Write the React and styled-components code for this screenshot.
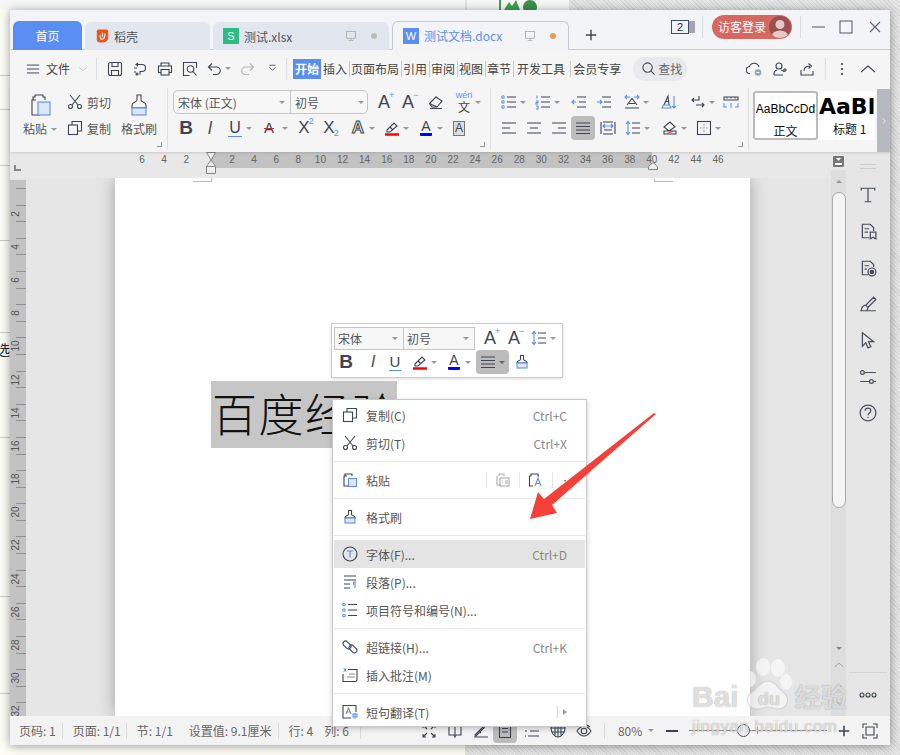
import React from 'react';
import styled, { createGlobalStyle } from 'styled-components';

const BLUE = '#5a8ef0';
const DARK = '#3d4454';
const SANS = '"Noto Sans CJK SC", "Noto Sans", sans-serif';
const LATIN = '"Liberation Sans", "Noto Sans CJK SC", sans-serif';

const Global = createGlobalStyle`
  html, body { margin: 0; padding: 0; }
  body { font-family: ${SANS}; font-size: 12px; color: #555; }
`;

const Screen = styled.div`
  position: relative;
  width: 900px;
  height: 755px;
  padding: 10px;
  box-sizing: border-box;
  overflow: hidden;
  background-color: #dedede;
  background-image:
    linear-gradient(#f7f7f7, #f7f7f7),
    linear-gradient(#fdfdf6, #fdfdf6),
    linear-gradient(#fdfdf8, #fdfdf8),
    repeating-linear-gradient(45deg, #d8d8d8 0 1px, #e6e6e6 1px 3px);
  background-size: 570px 10px, 465px 10px, 10px 100%, 100% 100%;
  background-position: 0 0, 0 100%, 0 0, 0 0;
  background-repeat: no-repeat;
`;

const SideLine = styled.div`
  position: absolute;
  left: 0;
  top: ${p => p.$y}px;
  width: 10px;
  height: 1px;
  background: #ccc;
`;

const PeekText = styled.span`
  position: absolute;
  left: -4px;
  top: 339px;
  font-size: 14px;
  color: #223;
`;

const TopPeek = styled.svg`
  position: absolute;
  left: 460px;
  top: 0;
  width: 110px;
  height: 10px;
`;

const Win = styled.div`
  position: relative;
  display: flex;
  flex-direction: column;
  height: 735px;
  background: #f5f5f5;
  box-shadow: 0 1px 9px rgba(0, 0, 0, 0.4);
`;

/* tabs */
const TabBar = styled.div`
  display: flex;
  align-items: flex-end;
  height: 40px;
  flex: none;
  box-sizing: border-box;
  padding-left: 3px;
  background: #f3f4f8;
  border-bottom: 1px solid #c6cad4;
`;

const Tab = styled.div`
  display: flex;
  align-items: center;
  width: ${p => p.$w}px;
  height: 28px;
  box-sizing: border-box;
  margin-right: 3px;
  margin-bottom: -1px;
  padding-left: ${p => p.$pl || 10}px;
  border-radius: 6px 6px 0 0;
  font-size: 12px;
  background: #e2e6ef;
  color: #555;
  ${p => p.$home && `background: ${BLUE}; color: #fff; justify-content: center; padding-left: 0; height: 29px; border-bottom: 1px solid ${BLUE};`}
  ${p => p.$active && `background: #f3f4f8; color: ${BLUE}; border: 1px solid #c6cad4; border-bottom: 1px solid #f3f4f8; height: 29px; margin-bottom: -1px;`}
`;

const TabLabel = styled.span`
  margin-left: 5px;
  white-space: nowrap;
`;

const TabTail = styled.div`
  margin-left: auto;
  display: flex;
  align-items: center;
  gap: 14px;
  padding-right: 12px;
`;

const Dot = styled.i`
  width: 6px;
  height: 6px;
  border-radius: 50%;
  background: ${p => p.$c};
`;

const BadgeIcon = styled.div`
  width: 16px;
  height: 16px;
  display: flex;
  align-items: center;
  justify-content: center;
  background: ${p => p.$c};
  color: #fff;
  font: 11px ${LATIN};
  flex: none;
`;

const NewTab = styled.div`
  align-self: center;
  margin: 10px 0 0 3px;
  width: 32px;
  display: flex;
  justify-content: center;
`;

const WinTools = styled.div`
  margin-left: auto;
  align-self: stretch;
  display: flex;
  align-items: center;
  padding-bottom: 6px;
  padding-right: 7px;
`;

const CountBox = styled.div`
  width: 16px;
  height: 12px;
  border: 1px solid #3d4a66;
  font: 11px/12px ${LATIN};
  color: #223;
  text-align: center;
`;

const LoginPill = styled.div`
  display: flex;
  align-items: center;
  justify-content: space-between;
  width: 80px;
  height: 24px;
  box-sizing: border-box;
  margin-left: 9px;
  padding: 0 1px 0 6px;
  border-radius: 12px;
  background: #d6685f;
  color: #fff;
  font-size: 12px;
`;

const Avatar = styled.div`
  width: 22px;
  height: 22px;
  border-radius: 50%;
  overflow: hidden;
  background: #9c4f50;
`;

const VLine = styled.div`
  width: 1px;
  height: ${p => p.$h || 22}px;
  flex: none;
  margin-left: ${p => p.$ml || 0}px;
  background: #d9dbe0;
`;

/* menu row */
const MenuRow = styled.div`
  display: flex;
  align-items: center;
  height: 37px;
  flex: none;
  padding-left: 16px;
  background: #f5f5f5;
`;

const Cell = styled.div`
  display: flex;
  align-items: center;
  justify-content: center;
  flex: none;
  width: ${p => p.$w || 16}px;
  margin-left: ${p => p.$ml || 0}px;
  ${p => p.$box && 'height: 24px; border-radius: 4px; background: #bcbcbc;'}
`;

const MenuText = styled.span`
  margin-left: ${p => p.$ml || 0}px;
  color: #444;
  white-space: nowrap;
`;

const StartTab = styled.div`
  margin-left: 6px;
  width: 28px;
  height: 20px;
  line-height: 20px;
  text-align: center;
  background: ${BLUE};
  color: #fff;
  font-weight: 700;
`;

const MenuTab = styled.div`
  margin-left: ${p => p.$ml || 0}px;
  padding: 0 2px 0 ${p => p.$pl || 1}px;
  line-height: 16px;
  color: #444;
  white-space: nowrap;
  ${p => p.$plain ? '' : 'border-left: 1px solid #c8c8c8;'}
`;

const SearchPill = styled.div`
  display: flex;
  align-items: center;
  gap: 2px;
  width: 54px;
  height: 24px;
  box-sizing: border-box;
  margin-left: 10px;
  padding-left: 8px;
  border-radius: 12px;
  background: #e8eaed;
  color: #666;
`;

const Tail = styled.div`
  margin-left: auto;
  display: flex;
  align-items: center;
  padding-right: 9px;
`;

/* ribbon */
const Ribbon = styled.div`
  display: flex;
  height: 65px;
  flex: none;
  padding-top: 1px;
  box-sizing: border-box;
  background: #f5f5f5;
  box-shadow: 0 1px 2px rgba(0, 0, 0, 0.12);
  position: relative;
  z-index: 2;
`;

const Group = styled.div`
  position: relative;
  display: flex;
  flex: none;
  width: ${p => p.$w}px;
  height: 62px;
  box-sizing: border-box;
  padding: 2px 0 0 ${p => p.$pl || 0}px;
  border-right: 1px solid #e0e0e0;
  ${p => p.$stack && 'flex-direction: column; gap: 2px;'}
`;

const Launcher = styled.i`
  position: absolute;
  right: 5px;
  bottom: 3px;
  width: 4px;
  height: 4px;
  border-right: 1px solid #999;
  border-bottom: 1px solid #999;
`;

const BigCol = styled.div`
  display: flex;
  flex-direction: column;
  align-items: center;
  flex: none;
  width: ${p => p.$w}px;
  margin-left: ${p => p.$ml || 0}px;
  padding-top: 3px;
`;

const BigLabel = styled.div`
  display: flex;
  align-items: center;
  gap: 4px;
  margin-top: 3px;
  line-height: 18px;
  white-space: nowrap;
`;

const SmallCol = styled.div`
  display: flex;
  flex-direction: column;
  gap: 2px;
  flex: none;
  margin-left: 10px;
  width: 44px;
`;

const Row = styled.div`
  display: flex;
  align-items: center;
  height: 24px;
  gap: ${p => p.$gap || 0}px;
`;

const Caret = styled.i`
  flex: none;
  width: 0;
  height: 0;
  margin-left: ${p => p.$ml ?? 3}px;
  border: 3px solid transparent;
  border-top: 3px solid ${p => p.$c || '#999'};
  border-bottom: 0;
  ${p => p.$up && 'transform: rotate(180deg);'}
`;

const FontBox = styled.div`
  display: flex;
  width: ${p => p.$w}px;
  height: ${p => p.$h}px;
  flex: none;
  box-sizing: border-box;
  border: 1px solid #c6c6c6;
  border-radius: ${p => p.$r || 0}px;
  overflow: hidden;
  background: #f7f7f7;
`;

const FontField = styled.div`
  display: flex;
  align-items: center;
  justify-content: space-between;
  box-sizing: border-box;
  flex: ${p => p.$w}px 0 0;
  padding: 0 5px 0 ${p => p.$pl || 4}px;
  color: #555;
  white-space: nowrap;
  & + & { border-left: 1px solid #c6c6c6; }
`;

const Glyph = styled.span`
  position: relative;
  display: inline-block;
  font-family: ${LATIN};
  font-size: ${p => p.$s || 17}px;
  line-height: 20px;
  font-weight: ${p => (p.$bold ? 700 : 400)};
  font-style: ${p => (p.$it ? 'italic' : 'normal')};
  color: ${p => p.$c || DARK};
  ${p => p.$under && `border-bottom: 1px solid ${BLUE}; line-height: 17px; padding: 0 1px;`}
  ${p => p.$strike && 'text-decoration: line-through; text-decoration-color: #b33;'}
  ${p => p.$outline && 'color: #eee; -webkit-text-stroke: 1px #444; font-weight: 700;'}
  ${p => p.$framed && 'border: 1px solid #777; background: #ddd; line-height: 13px; padding: 0 1px;'}
`;

const Mark = styled.sup`
  position: absolute;
  left: 100%;
  top: ${p => (p.$low ? '10px' : '-2px')};
  margin-left: -1px;
  font-size: 9px;
  line-height: 10px;
  color: ${BLUE};
  vertical-align: baseline;
`;

const ColorA = styled.span`
  display: inline-block;
  padding: 0 1px;
  font: 14px/13px ${LATIN};
  color: ${DARK};
  border-bottom: 3px solid ${p => p.$c};
  border-radius: 1px;
`;

const Wen = styled.div`
  display: flex;
  flex-direction: column;
  align-items: center;
  font-size: 12px;
  line-height: 13px;
  color: #444;
`;

const WenTop = styled.span`
  font: 9px/9px ${LATIN};
  color: ${BLUE};
`;

const Gallery = styled.div`
  display: flex;
  margin: 3px 0 0 4px;
  height: 49px;
  width: 122px;
  background: #fff;
  overflow: hidden;
`;

const StyleCard = styled.div`
  flex: none;
  width: ${p => p.$w}px;
  box-sizing: border-box;
  display: flex;
  flex-direction: column;
  align-items: ${p => (p.$on ? 'center' : 'flex-start')};
  overflow: hidden;
  white-space: nowrap;
  color: #111;
  ${p => p.$on && 'border: 2px solid #bbb; border-radius: 3px;'}
`;

const CardSample = styled.div`
  height: 30px;
  font-family: ${p => (p.$bold ? '"DejaVu Sans", sans-serif' : LATIN)};
  font-size: ${p => p.$s}px;
  font-weight: ${p => (p.$bold ? 700 : 400)};
  line-height: 32px;
  color: #000;
  ${p => p.$bold && 'margin-left: 1px;'}
`;

const CardName = styled.div`
  line-height: 16px;
  font-size: 12px;
  ${p => p.$inset && 'margin-left: 15px;'}
`;

const GalleryBtn = styled.div`
  position: absolute;
  right: 0;
  top: 2px;
  bottom: 0;
  width: 13px;
  display: flex;
  align-items: center;
  justify-content: center;
  background: #b6b9c0;
`;

/* work area */
const Work = styled.div`
  display: flex;
  flex: 1;
  min-height: 0;
`;

const EditorCol = styled.div`
  display: flex;
  flex-direction: column;
  width: 821px;
  flex: none;
  min-width: 0;
`;

const RulerBar = styled.div`
  position: relative;
  display: flex;
  height: 26px;
  flex: none;
  background: #e8e8e8;
  font: 10px/16px ${LATIN};
  color: #666;
`;

const RulerSeg = styled.div`
  display: flex;
  flex: none;
  width: ${p => p.$w}px;
  height: 16px;
  padding-left: ${p => p.$pl || 0}px;
  box-sizing: border-box;
  ${p => p.$dark && 'background: #c2c2c2;'}
`;

const RulerNum = styled.span`
  flex: none;
  width: 22.1px;
  text-align: center;
`;

const Corner = styled.i`
  position: absolute;
  left: 4px;
  top: 13px;
  width: 5px;
  height: 4px;
  border-left: 2px solid #888;
  border-bottom: 2px solid #888;
`;

const RulerMark = styled.svg`
  position: absolute;
  left: ${p => p.$x}px;
  top: ${p => p.$y}px;
`;

const DocRegion = styled.div`
  display: flex;
  flex: 1;
  min-height: 0;
  overflow: hidden;
  background: #e6e6e6;
`;

const VRuler = styled.div`
  flex: none;
  width: 16px;
  margin-top: 2px;
  padding-top: 8px;
  overflow: hidden;
  background: #c2c2c2;
  position: relative;
  z-index: 1;
`;

const VTick = styled.div`
  position: relative;
  height: 16.6px;
  box-sizing: border-box;
  border-top: 1px solid #8f8f8f;
  margin-left: 6px;
`;

const VNum = styled.span`
  position: absolute;
  left: -8px;
  top: 0;
  width: 16px;
  height: 16px;
  transform: rotate(-90deg);
  font: 10px/16px ${LATIN};
  color: #555;
  text-align: center;
`;

const PageSheet = styled.div`
  position: relative;
  flex: none;
  width: 635px;
  margin-left: 89px;
  box-sizing: border-box;
  padding: 203px 0 0 96px;
  background: #fff;
  box-shadow: 0 0 16px rgba(0, 0, 0, 0.3);
`;

const CropMark = styled.i`
  position: absolute;
  top: 0;
  left: ${p => p.$x}px;
  width: 18px;
  height: 3px;
  border-bottom: 1px solid #bbb;
  ${p => (p.$right ? 'border-left: 1px solid #bbb;' : 'border-right: 1px solid #bbb;')}
`;

const Selection = styled.div`
  width: 186px;
  height: 67px;
  padding-left: 1px;
  box-sizing: border-box;
  background: #c6c6c6;
  color: #111;
  font: 300 45px/64px ${SANS};
  letter-spacing: 1.5px;
  white-space: nowrap;
  overflow: hidden;
`;

const ScrollCol = styled.div`
  display: flex;
  flex-direction: column;
  flex: none;
  width: 15px;
  background: #e8e8e8;
`;

const ScrollHead = styled.div`
  height: 18px;
  flex: none;
  display: flex;
  align-items: flex-start;
  justify-content: center;
  padding-top: 4px;
  box-sizing: border-box;
`;

const Track = styled.div`
  flex: 1;
  display: flex;
  flex-direction: column;
  align-items: center;
  background: #dedede;
`;

const TrackBtn = styled.div`
  height: ${p => p.$h}px;
  width: 100%;
  flex: none;
  display: flex;
  align-items: center;
  justify-content: center;
`;

const Thumb = styled.div`
  width: 14px;
  height: 316px;
  flex: none;
  box-sizing: border-box;
  border: 1px solid #aaa;
  border-radius: 8px;
  background: #f5f5f5;
`;

const TrackEnd = styled.div`
  margin-top: auto;
  width: 100%;
  padding-bottom: 6px;
`;

const SidePanel = styled.div`
  display: flex;
  flex-direction: column;
  align-items: center;
  flex: 1;
  background: #e6e6e6;
`;

const Grip = styled.div`
  width: 16px;
  height: 3px;
  margin: 12px 0 8px;
  border-top: 1px solid #ccc;
  border-bottom: 1px solid #ccc;
`;

const SideBtn = styled.div`
  height: 36.3px;
  flex: none;
  display: flex;
  align-items: center;
  justify-content: center;
`;

const SideFoot = styled.div`
  margin-top: auto;
  width: 38px;
  height: 43px;
  display: flex;
  align-items: center;
  justify-content: center;
  border-top: 1px solid #d4d4d4;
`;

/* status bar */
const Status = styled.div`
  display: flex;
  align-items: center;
  height: 29px;
  flex: none;
  padding-left: 9px;
  background: #f3f3f3;
  color: #666;
  font-size: 12px;
`;

const StatusItem = styled.span`
  margin-left: ${p => p.$ml || 0}px;
  white-space: nowrap;
`;

const SliderLine = styled.div`
  position: relative;
  width: 138px;
  height: 1px;
  margin-left: 9px;
  background: #888;
`;

const SliderKnob = styled.i`
  position: absolute;
  left: 48px;
  top: -6px;
  width: 11px;
  height: 11px;
  border: 1px solid #555;
  border-radius: 50%;
  background: #eee;
`;

const SliderTick = styled.i`
  position: absolute;
  left: 68px;
  top: -3px;
  width: 1px;
  height: 7px;
  background: #999;
`;

/* floating toolbar */
const MiniBar = styled.div`
  position: absolute;
  left: 331px;
  top: 323px;
  width: 232px;
  height: 55px;
  box-sizing: border-box;
  padding: 2px 0 0 2px;
  border: 1px solid #ccc;
  background: #fff;
  box-shadow: 0 1px 3px rgba(0, 0, 0, 0.15);
`;

/* context menu */
const Menu = styled.div`
  position: absolute;
  left: 332px;
  top: 399px;
  width: 255px;
  height: 328px;
  box-sizing: border-box;
  padding: 1px;
  border: 1px solid #c8c8c8;
  background: #fff;
  box-shadow: 0 2px 5px rgba(0, 0, 0, 0.2);
`;

const MenuItem = styled.div`
  display: flex;
  align-items: center;
  height: 28px;
  padding: 0 18px 0 8px;
  color: #555;
  ${p => p.$on && 'background: #e4e4e4;'}
`;

const ItemLabel = styled.span`
  margin-left: 8px;
  white-space: nowrap;
`;

const Shortcut = styled.span`
  margin-left: auto;
  color: #888;
  font-size: 12px;
`;

const MenuSep = styled.div`
  height: 9px;
  display: flex;
  align-items: center;
  &::after { content: ''; flex: 1; height: 1px; background: #e8e8e8; }
`;

const PasteTools = styled.div`
  margin-left: auto;
  display: flex;
  align-items: center;
  margin-right: -18px;
`;

const PasteCell = styled.div`
  width: 32px;
  height: 16px;
  display: flex;
  align-items: center;
  justify-content: center;
  border-left: 1px solid #e4e4e4;
`;

const SubArrow = styled.i`
  margin-left: 5px;
  width: 0;
  height: 0;
  border: 3px solid transparent;
  border-left: 4px solid #999;
  border-right: 0;
`;

const Arrow = styled.svg`
  position: absolute;
  left: 520px;
  top: 405px;
`;

const Watermark = styled.div`
  position: absolute;
  left: 690px;
  top: 655px;
  width: 165px;
  height: 80px;
  pointer-events: none;
`;

const WmWords = styled.div`
  position: absolute;
  left: ${p => p.$x}px;
  top: ${p => p.$y}px;
  font-family: ${p => (p.$cjk ? SANS : LATIN)};
  font-size: ${p => p.$s}px;
  line-height: 1;
  font-weight: ${p => (p.$thin ? 400 : 700)};
  letter-spacing: ${p => p.$ls || 0}px;
  color: rgba(255, 255, 255, 0.72);
  text-shadow: 0 0 1px rgba(0, 0, 0, 0.45);
  white-space: nowrap;
`;

const Svg = styled.svg`
  display: block;
  flex: none;
  fill: none;
  stroke: ${p => p.$c || DARK};
  stroke-width: ${p => p.$sw || 1.1};
`;

const b = { stroke: BLUE };

const ICONS = {
  menu: <path d="M1 3.5h14M1 8h14M1 12.5h14" />,
  chevDown: <path d="M2 5.5l6 5 6-5" />,
  chevUp: <path d="M1 11l7-6 7 6" />,
  chevRight: <path d="M6 4l4 4-4 4" />,
  save: <g><rect x="1.500" y="1.500" width="13" height="13" rx="2" /><path d="M5 1.500v4h6v-4M4.500 14.500V9.500h7v5" /></g>,
  convert: <g><path d="M5 3.500h5a3.500 3.500 0 0 1 0 7H8v3" /><path d="M6 2L4 3.500 6 5M2 7h3M2 11h2" /><circle cx="5" cy="13" r="1" /></g>,
  print: <g><path d="M4 5V2h8v3M4 11.500H1.500V5h13v6.500H12" /><rect x="4" y="8.500" width="8" height="5.500" /></g>,
  preview: <g><path d="M14.500 7V1.500h-13v13h6" /><circle cx="8.500" cy="8" r="3.300" /><path d="M11 10.500l3.500 4" /></g>,
  undo: <path d="M5 2.500L1.500 6 5 9.500M1.500 6h8a3.500 3.500 0 0 1 0 7.500H6" />,
  redo: <path d="M11 2.500L14.500 6 11 9.500M14.500 6h-8a3.500 3.500 0 0 0 0 7.500H10" />,
  qat: <path d="M2 3h8M2 6l4 3.500L10 6" />,
  search: <g><circle cx="7" cy="7" r="5" /><path d="M10.500 10.500l4 4" /></g>,
  cloud: <g><path d="M4 12.500a3.500 3.500 0 0 1-.5-7A5 5 0 0 1 13 6" /><circle cx="12" cy="11.500" r="3.300" fill="#9aa4b8" stroke="none" /><path d="M10.500 11.500h3" stroke="#fff" /></g>,
  userPlus: <g><circle cx="7" cy="5" r="3" /><path d="M2 14v-1.500a4 4 0 0 1 3-3.500M9 9a4 4 0 0 1 3 2M2 14h9M11 9h4M13 7v4" /></g>,
  shareUp: <g><path d="M2 9v5h12V10" /><path d="M5 10c0-4 3-5 6-5M9.500 2.500L12.500 5 9.500 7.500" /></g>,
  dots: <g fill="#3d4454" stroke="none"><circle cx="8" cy="3" r="1.100" /><circle cx="8" cy="8" r="1.100" /><circle cx="8" cy="13" r="1.100" /></g>,
  monitor: <g><rect x="2" y="2" width="12" height="9" /><path d="M8 11v3M5 14h6" /></g>,
  plus: <path d="M8 2v12M2 8h12" />,
  minimize: <path d="M2 8h13" />,
  maximize: <rect x="2" y="2" width="12" height="12" />,
  close: <path d="M3 3l10 10M13 3L3 13" />,
  paste: <g><path d="M8 7H4v15h8" /><path d="M5 7V4h2V2h8v2h2v3" /><rect x="10" y="9" width="12" height="13" fill="#dfe7f6" {...b} /></g>,
  scissors: <g><circle cx="3.500" cy="12.500" r="2" /><circle cx="12.500" cy="12.500" r="2" /><path d="M5 11L13 1M11 11L3 1" /></g>,
  copy: <g><rect x="1.500" y="5" width="9" height="9.500" /><path d="M5 5V1.500h9.500V11H10.500" /></g>,
  brush: <g><path d="M10 2h4v5c0 2 5 2 5 5v3H5v-3c0-3 5-3 5-5z" /><rect x="5" y="15" width="14" height="7" fill="#dfe7f6" {...b} /></g>,
  brushSm: <g><path d="M6.500 1.500h3v4c0 1 3.500 1 3.500 3V9H3v-.5c0-2 3.500-2 3.500-3z" /><rect x="3" y="9" width="10" height="5" fill="#dfe7f6" {...b} /></g>,
  pasteSm: <g><path d="M5 4H2v10h4" /><path d="M3 4V2h7v2" /><rect x="6.500" y="6.500" width="8" height="8" fill="#dfe7f6" {...b} /></g>,
  eraser: <g><path d="M1.500 9.500L8 3l6 4-5 6H4z" /><path d="M1.500 9.500L9 13M2 14.500h12" /></g>,
  bullets: <g><path d="M6 3h9M6 8h9M6 13h9" /><g {...b}><circle cx="2" cy="3" r="1.200" /><circle cx="2" cy="8" r="1.200" /><circle cx="2" cy="13" r="1.200" /></g></g>,
  numbers: <g><path d="M6 3h9M6 8h9M6 13h9" /><path d="M2 1.500v3M1 7h2v1.500H1V10h2M1 12h2v3H1" {...b} /></g>,
  outdent: <g><path d="M6 3h9M8 8h7M6 13h9" /><path d="M5 8H1M3 6L1 8l2 2" {...b} /></g>,
  indent: <g><path d="M6 3h9M8 8h7M6 13h9" /><path d="M1 8h5M4 6l2 2-2 2" {...b} /></g>,
  pyramid: <g><path d="M1 14h14M3 11L8 4.500l5 6.500M5 9.500h6" /><path d="M1 3h5M3 1L1 3l2 2M10 3h5M13 1l2 2-2 2" {...b} /></g>,
  sort: <g><path d="M3 11L7 2l1 9M4.500 7.500h3.500" /><path d="M1 14h9l-1.500-3H2.500zM13 2v12M11 12l2 2 2-2" {...b} /></g>,
  returnMark: <path d="M9 2v4H2M4 4L2 6l2 2M14 11H6M12 9l2 2-2 2" />,
  rulerIcon: <g {...b}><path d="M1 9v4h3M15 9v4h-3M7 13h2M8 9v3" /><path d="M1 3h14v3H1zM4 3v1.500M8 3v1.500M12 3v1.500" stroke={DARK} /></g>,
  alLeft: <path d="M1 3h14M1 8h8M1 13h14" />,
  alCenter: <path d="M1 3h14M4 8h8M1 13h14" />,
  alRight: <path d="M1 3h14M7 8h8M1 13h14" />,
  justify: <path d="M1 3h14M1 6.500h14M1 10h14M1 13.500h14" />,
  distribute: <g><path d="M1 2v12M15 2v12M3 2h10M3 14h10M4 10h8" /><path d="M3 6h10M5 4L3 6l2 2M11 4l2 2-2 2" {...b} /></g>,
  lineSpace: <g><path d="M7 3h8M7 8h8M7 13h8" /><path d="M3 1.500v13M1 4l2-2.500L5 4M1 12l2 2.500L5 12" {...b} /></g>,
  shading: <g><path d="M2 7l6-5 5 5-6 4zM2 11h12v3H2z" /><path d="M5 13.500l6-2" stroke="#e44" /></g>,
  border: <g><rect x="1.500" y="1.500" width="13" height="13" /><path d="M8 4v8M4 8h8" strokeDasharray="1.500 1.500" stroke="#999" /></g>,
  highlight: <g><path d="M3 10l7-7 3 3-7 6H3z" /><path d="M6 7l3 3" /></g>,
  tsymbol: <path d="M2 4V2h12v2M8 2v12M5 14h6" />,
  docMark: <g><path d="M9 14H3V2h7l3 3v3" /><path d="M5 6h4M5 9h3" /><path d="M10 9h5v6l-2.500-1.500L10 15z" /></g>,
  docGear: <g><path d="M8 14H3V2h7l3 3v2" /><path d="M5 6h4M5 9h2" /><circle cx="11.500" cy="11.500" r="3.500" /><circle cx="11.500" cy="11.500" r="1.500" fill="#3d4454" /></g>,
  sidePen: <path d="M1 14h14M2 14c0-3 2-5 4-5l7-7 2 2-7 7c0 1-1 3-2 3M6 9l2 2" />,
  cursor: <path d="M3 1.500v12l3-3 2 4.500 2.500-1-2-4.500H13z" />,
  sliders: <g><circle cx="3" cy="4" r="1.700" /><path d="M5 4h10M1 12h8" /><circle cx="11" cy="12" r="1.700" /><path d="M13 12h2" /></g>,
  help: <g><circle cx="8" cy="8" r="7" /><path d="M5.500 6c0-3 5-3 5 0 0 2-2.500 2-2.500 4M8 11.500v1" /></g>,
  tCircle: <g><circle cx="8" cy="8" r="7" /><path d="M5 5h6M8 5v6.500" {...b} /></g>,
  para: <g><path d="M2 2h12M2 6h12M2 10h6M2 14h6" /><path d="M11 8h3M13 8v6M11.500 8v3" {...b} /></g>,
  bulletsTall: <g><path d="M6 2.500h9M6 8h9M6 13.500h9" /><g {...b}><circle cx="2" cy="2.500" r="1.300" /><circle cx="2" cy="8" r="1.300" /><circle cx="2" cy="13.500" r="1.300" /></g></g>,
  link: <g><rect x="0.500" y="3.500" width="9" height="5" rx="2.500" transform="rotate(45 5 6)" /><rect x="6.500" y="7.500" width="9" height="5" rx="2.500" transform="rotate(45 11 10)" /></g>,
  comment: <g><path d="M6 2.500h9V13l-1 1.500H1V7" /><path d="M7 7h6M5 10h8" stroke="#888" /><path d="M1.500 1.500l3 3M4.500 1.500l-3 3M3 1v4" {...b} strokeWidth=".8" /></g>,
  translate: <g><path d="M9 14H1V1.500h13V8" /><path d="M4 10l2.500-6L9 10M5 8h3" stroke="#888" /><path d="M11 10h4v3h-4zM13 9v6" {...b} /></g>,
  pasteGray: <g stroke="#aaa"><path d="M2 4v9h4" /><path d="M4 4V2h5v2" /><rect x="5" y="6" width="9" height="8" /><path d="M7 9h1M7 11h1M10 9h3M10 11h3" /></g>,
  pasteText: <g><path d="M3 4H1.500v10H5" /><path d="M3 4V2h7v2h1" /><path d="M7 14l3-8 3 8M8 11.500h4" {...b} /></g>,
  expand: <path d="M2 2l4 4M2 5V2h3M14 2l-4 4M14 5V2h-3M2 14l4-4M2 11v3h3M14 14l-4-4M14 11v3h-3" />,
  book: <path d="M2 2v10h5l1 2 1-2h5V2M8 2v10" />,
  pen: <path d="M1 14h14M2 12l8-8 3-2-2 3-8 8zM6 8l2 2" />,
  pageView: <g><rect x="2.500" y="1.500" width="11" height="13" /><path d="M5 5.500h6M5 9h6" /></g>,
  listView: <path d="M4 3h11M6 8h9M4 13h11M1 3h1M1 8h2M1 13h1" />,
  globe: <g><path d="M1 5h14c0 4-3 9-7 9s-7-5-7-9zM1 5c0-2 3-3 7-3s7 1 7 3" /><path d="M5 2.500v10M8 2v12M11 2.500v10M1.500 9h13" /></g>,
  eye: <g><path d="M1 8c2-3 4-5 7-5s5 2 7 5c-2 3-4 5-7 5s-5-2-7-5z" /><circle cx="8" cy="8" r="2.800" /><path d="M11 2l3 2" /></g>,
  minus: <path d="M2 8h12" />,
  fit: <path d="M1 5V1h4M11 1h4v4M15 11v4h-4M5 15H1v-4M4 4h8v8H4z" />,
};

const Ico = ({ n, s = 16, c, sw, vb = 16 }) => (
  <Svg viewBox={`0 0 ${vb} ${vb}`} width={s} height={s} $c={c} $sw={sw}>
    {ICONS[n]}
  </Svg>
);

const Tool = ({ n, ml, w, c }) => (
  <Cell $ml={ml} $w={w}><Ico n={n} c={c} /></Cell>
);

const hRuler = [];
for (let v = 2; v <= 46; v += 2) hRuler.push(v);
const vRuler = [];
for (let i = 0; i < 34; i++) vRuler.push(i);
const sideLines = [75, 109, 165, 240, 332, 437, 596, 693];

const MENU_TABS = [
  { t: '页面布局' }, { t: '引用' }, { t: '审阅' }, { t: '视图' }, { t: '章节' },
  { t: '开发工具', pl: 3 }, { t: '会员专享', ml: 3, pl: 2 },
];

const SIDE = ['tsymbol', 'docMark', 'docGear', 'sidePen', 'cursor', 'sliders', 'help'];

export default function App() {
  return (
    <Screen>
      <Global />
      {sideLines.map(y => <SideLine key={y} $y={y} />)}
      <PeekText>选</PeekText>
      <TopPeek viewBox="0 0 110 10">
        <path d="M6 0v10M110 0v10" stroke="#ccc" />
        <path d="M40 0v10" stroke="#3fa34d" strokeWidth="2" />
        <path d="M44 10l5-8 3 4 4-6 4 10z" fill="#3fa34d" />
        <circle cx="70" cy="7" r="7" fill="#3d8f4c" />
      </TopPeek>

      <Win>
        <TabBar>
          <Tab $home $w={69}>首页</Tab>
          <Tab $w={125} $pl={11}>
            <Svg viewBox="0 0 16 16" width={13} height={16} $c="none">
              <path d="M3 0h10a2 2 0 0 1 2 2v8a6 6 0 0 1-6 6H4a3 3 0 0 1-3-3V2a2 2 0 0 1 2-2z" fill="#f2521c" />
              <path d="M5 7c0 3 1 5 2.500 5C10 12 11 8 11 5M8 4v5" stroke="#fff" strokeWidth="1.400" />
            </Svg>
            <TabLabel>稻壳</TabLabel>
          </Tab>
          <Tab $w={176}>
            <BadgeIcon $c="#2bbd82">S</BadgeIcon>
            <TabLabel>测试.xlsx</TabLabel>
            <TabTail>
              <Ico n="monitor" s={12} c="#aaa" />
              <Dot $c="#bbb" />
            </TabTail>
          </Tab>
          <Tab $active $w={177}>
            <BadgeIcon $c={BLUE}>W</BadgeIcon>
            <TabLabel>测试文档.docx</TabLabel>
            <TabTail>
              <Ico n="monitor" s={12} c="#aaa" />
              <Dot $c="#e89b55" />
            </TabTail>
          </Tab>
          <NewTab><Ico n="plus" s={14} c="#444" sw={1.600} /></NewTab>
          <WinTools>
            <CountBox>2</CountBox>
            <Svg viewBox="0 0 6 12" width={6} height={12} $c="#667"><path d="M1 0v12M3 0v12M5 0v12" /></Svg>
            <VLine $ml={7} />
            <LoginPill>
              访客登录
              <Avatar>
                <Svg viewBox="0 0 22 22" width={22} height={22} $c="none">
                  <circle cx="11" cy="8.500" r="4.500" fill="#e6c8c8" />
                  <ellipse cx="11" cy="20" rx="8" ry="5.500" fill="#e6c8c8" />
                </Svg>
              </Avatar>
            </LoginPill>
            <VLine $ml={8} />
            <Cell $ml={9} $w={16}><Ico n="minimize" c="#5a6478" /></Cell>
            <Cell $ml={12} $w={16}><Ico n="maximize" c="#5a6478" /></Cell>
            <Cell $ml={13} $w={16}><Ico n="close" c="#5a6478" /></Cell>
          </WinTools>
        </TabBar>

        <MenuRow>
          <Ico n="menu" s={14} />
          <MenuText $ml={6}>文件</MenuText>
          <Cell $ml={8} $w={10}><Ico n="chevDown" s={10} c="#aaa" /></Cell>
          <VLine $ml={8} />
          <Tool n="save" ml={5} w={25} />
          <Tool n="convert" w={25} />
          <Tool n="print" w={25} />
          <Tool n="preview" w={25} />
          <Tool n="undo" ml={4} w={18} />
          <Caret $ml={1} />
          <Tool n="redo" ml={9} w={14} c="#b5b5b5" />
          <Cell $ml={15} $w={10}><Ico n="qat" s={12} /></Cell>
          <VLine $ml={7} />
          <StartTab>开始</StartTab>
          <MenuTab $plain $ml={1}>插入</MenuTab>
          {MENU_TABS.map(m => <MenuTab key={m.t} $pl={m.pl} $ml={m.ml}>{m.t}</MenuTab>)}
          <SearchPill><Ico n="search" s={15} />查找</SearchPill>
          <Tail>
            <Tool n="cloud" w={26} />
            <Tool n="userPlus" w={26} />
            <Tool n="shareUp" ml={1} w={26} />
            <VLine $ml={5} />
            <Tool n="dots" ml={3} w={26} />
            <Tool n="chevUp" w={26} />
          </Tail>
        </MenuRow>

        <Ribbon>
          <Group $w={158} $pl={13}>
            <BigCol $w={34}>
              <Ico n="paste" s={24} vb={24} />
              <BigLabel>粘贴<Caret $ml={0} /></BigLabel>
            </BigCol>
            <SmallCol>
              <Row $gap={4}><Ico n="scissors" />剪切</Row>
              <Row $gap={4}><Ico n="copy" />复制</Row>
            </SmallCol>
            <BigCol $w={36} $ml={10}>
              <Ico n="brush" s={24} vb={24} />
              <BigLabel>格式刷</BigLabel>
            </BigCol>
            <Launcher />
          </Group>

          <Group $w={323} $pl={5} $stack>
            <Row>
              <FontBox $w={195} $h={24} $r={5}>
                <FontField $w={116}>宋体 (正文)<Caret $ml={0} /></FontField>
                <FontField $w={79}>初号<Caret $ml={0} /></FontField>
              </FontBox>
              <Cell $ml={8}><Glyph $s={18}>A<Mark>+</Mark></Glyph></Cell>
              <Cell $ml={8}><Glyph $s={18}>A<Mark>−</Mark></Glyph></Cell>
              <Tool n="eraser" ml={12} />
              <Cell $ml={12}><Wen><WenTop>wén</WenTop>文</Wen></Cell>
              <Caret />
            </Row>
            <Row>
              <Cell $ml={5}><Glyph $s={19} $bold>B</Glyph></Cell>
              <Cell $ml={8}><Glyph $s={18} $it $c="#555">I</Glyph></Cell>
              <Cell $ml={9}><Glyph $s={16} $under>U</Glyph></Cell>
              <Caret />
              <Cell $ml={9}><Glyph $s={15} $strike>A</Glyph></Cell>
              <Caret $ml={5} />
              <Cell $ml={8}><Glyph $s={17}>X<Mark>2</Mark></Glyph></Cell>
              <Cell $ml={9}><Glyph $s={17}>X<Mark $low>2</Mark></Glyph></Cell>
              <Cell $ml={13}><Glyph $s={17} $outline>A</Glyph></Cell>
              <Caret />
              <Cell $ml={9}><Svg viewBox="0 0 16 16" width={16} height={16}>{ICONS.highlight}<path d="M1 14.500h14" stroke="#f00" strokeWidth="2.500" /></Svg></Cell>
              <Caret />
              <Cell $ml={9}><ColorA $c="#00f">A</ColorA></Cell>
              <Caret />
              <Cell $ml={8}><Glyph $s={12} $framed>A</Glyph></Cell>
            </Row>
            <Launcher />
          </Group>

          <Group $w={258} $pl={10} $stack>
            <Row>
              <Tool n="bullets" /><Caret />
              <Tool n="numbers" ml={9} /><Caret />
              <Tool n="outdent" ml={11} />
              <Tool n="indent" ml={9} />
              <Tool n="pyramid" ml={12} /><Caret />
              <Tool n="sort" ml={12} />
              <Tool n="returnMark" ml={13} /><Caret />
              <Tool n="rulerIcon" ml={8} />
            </Row>
            <Row>
              <Tool n="alLeft" />
              <Tool n="alCenter" ml={9} />
              <Tool n="alRight" ml={9} />
              <Cell $ml={4} $w={24} $box><Ico n="justify" /></Cell>
              <Tool n="distribute" ml={5} />
              <Tool n="lineSpace" ml={9} /><Caret />
              <Tool n="shading" ml={12} /><Caret />
              <Tool n="border" ml={9} /><Caret />
            </Row>
            <Launcher />
          </Group>

          <Gallery>
            <StyleCard $on $w={65}>
              <CardSample $s={12}>AaBbCcDd</CardSample>
              <CardName>正文</CardName>
            </StyleCard>
            <StyleCard $w={57}>
              <CardSample $s={22} $bold>AaBl</CardSample>
              <CardName $inset>标题 1</CardName>
            </StyleCard>
          </Gallery>
          <GalleryBtn><Ico n="chevRight" s={10} c="#fff" /></GalleryBtn>
        </Ribbon>

        <Work>
          <EditorCol>
            <RulerBar>
              <Corner />
              <RulerSeg $w={200} $pl={121}>
                {[6, 4, 2].map(v => <RulerNum key={v}>{v}</RulerNum>)}
              </RulerSeg>
              <RulerSeg $w={442} $pl={11} $dark>
                {hRuler.map(v => <RulerNum key={v}>{v}</RulerNum>)}
              </RulerSeg>
              <RulerMark $x={195} $y={0} width="12" height="22" viewBox="0 0 12 22">
                <path d="M1.500.500h9L6 8l4.500 6.500v7h-9v-7L6 8z" fill="#eee" stroke="#888" />
                <path d="M1.500 14.500h9" stroke="#888" />
              </RulerMark>
              <RulerMark $x={637} $y={10} width="12" height="8" viewBox="0 0 12 8">
                <path d="M1.500 7.500V4.500L6 .500l4.500 4v3z" fill="#eee" stroke="#888" />
              </RulerMark>
            </RulerBar>
            <DocRegion>
              <VRuler>
                {vRuler.map(i => (
                  <VTick key={i}>{i % 2 === 1 && <VNum>{i + 1}</VNum>}</VTick>
                ))}
              </VRuler>
              <PageSheet>
                <CropMark $x={78} />
                <CropMark $x={539} $right />
                <Selection>百度经验</Selection>
              </PageSheet>
            </DocRegion>
          </EditorCol>

          <ScrollCol>
            <ScrollHead>
              <Svg viewBox="0 0 11 11" width={11} height={11} $c="none">
                <rect width="11" height="11" rx="1" fill="#777" />
                <path d="M3 2h5L5.500 5z" fill="#fff" />
                <path d="M2 7h7v2H2z" fill="#fff" />
              </Svg>
            </ScrollHead>
            <Track>
              <TrackBtn $h={22}><Caret $ml={0} $up /></TrackBtn>
              <Thumb />
              <TrackEnd>
                <TrackBtn $h={16}><Caret $ml={0} $c="#888" /></TrackBtn>
                <TrackBtn $h={18}><Ico n="chevUp" s={10} c="#888" /></TrackBtn>
                <TrackBtn $h={22}><Caret $ml={0} $c="#bbb" $up /></TrackBtn>
                <TrackBtn $h={14}><Caret $ml={0} $c="#bbb" /></TrackBtn>
              </TrackEnd>
            </Track>
          </ScrollCol>

          <SidePanel>
            <Grip />
            {SIDE.map(n => <SideBtn key={n}><Ico n={n} s={18} c="#4a4f5c" /></SideBtn>)}
            <SideFoot>
              <Svg viewBox="0 0 18 6" width={18} height={6}>
                <circle cx="3" cy="3" r="2" /><circle cx="9" cy="3" r="2" /><circle cx="15" cy="3" r="2" />
              </Svg>
            </SideFoot>
          </SidePanel>
        </Work>

        <Status>
          <StatusItem>页码: 1</StatusItem>
          <VLine $ml={6} $h={16} />
          <StatusItem $ml={10}>页面: 1/1</StatusItem>
          <VLine $ml={5} $h={16} />
          <StatusItem $ml={10}>节: 1/1</StatusItem>
          <StatusItem $ml={16}>设置值: 9.1厘米</StatusItem>
          <VLine $ml={6} $h={16} />
          <StatusItem $ml={10}>行: 4</StatusItem>
          <StatusItem $ml={11}>列: 6</StatusItem>
          <VLine $ml={11} $h={16} />
          <Tool n="expand" ml={60} />
          <Tool n="book" ml={10} />
          <Tool n="pen" ml={10} />
          <Cell $ml={4} $w={24} $box><Ico n="pageView" /></Cell>
          <Tool n="listView" ml={7} />
          <Tool n="globe" ml={10} />
          <Tool n="eye" ml={10} />
          <VLine $ml={12} $h={16} />
          <StatusItem $ml={13}>80%</StatusItem>
          <Caret $ml={6} />
          <Cell $ml={10}><Ico n="minus" c="#3d4454" sw={2} /></Cell>
          <SliderLine><SliderKnob /><SliderTick /></SliderLine>
          <Cell $ml={9}><Ico n="plus" s={14} sw={1.800} /></Cell>
          <Cell $ml={10}><Ico n="fit" /></Cell>
        </Status>
      </Win>

      <MiniBar>
        <Row>
          <FontBox $w={141} $h={23}>
            <FontField $w={68} $pl={3}>宋体<Caret $ml={0} /></FontField>
            <FontField $w={71} $pl={3}>初号<Caret $ml={0} /></FontField>
          </FontBox>
          <Cell $ml={7}><Glyph $s={18}>A<Mark>+</Mark></Glyph></Cell>
          <Cell $ml={8}><Glyph $s={18}>A<Mark>−</Mark></Glyph></Cell>
          <Tool n="lineSpace" ml={9} />
          <Caret />
        </Row>
        <Row>
          <Cell $ml={4}><Glyph $s={19} $bold>B</Glyph></Cell>
          <Cell $ml={11}><Glyph $s={17} $it $c="#555">I</Glyph></Cell>
          <Cell $ml={6}><Glyph $s={15} $under>U</Glyph></Cell>
          <Cell $ml={9}><Svg viewBox="0 0 16 16" width={16} height={16}>{ICONS.highlight}<path d="M1 14.500h14" stroke="#f00" strokeWidth="2.500" /></Svg></Cell>
          <Caret />
          <Cell $ml={9}><ColorA $c="#00f">A</ColorA></Cell>
          <Caret />
          <Cell $ml={5} $w={33} $box><Ico n="justify" /><Caret $c="#666" /></Cell>
          <Tool n="brushSm" ml={5} />
        </Row>
      </MiniBar>

      <Menu>
        <MenuItem><Ico n="copy" /><ItemLabel>复制(C)</ItemLabel><Shortcut>Ctrl+C</Shortcut></MenuItem>
        <MenuItem><Ico n="scissors" /><ItemLabel>剪切(T)</ItemLabel><Shortcut>Ctrl+X</Shortcut></MenuItem>
        <MenuSep />
        <MenuItem>
          <Ico n="pasteSm" />
          <ItemLabel>粘贴</ItemLabel>
          <PasteTools>
            <PasteCell><Ico n="pasteGray" /></PasteCell>
            <PasteCell><Ico n="pasteText" /></PasteCell>
            <PasteCell>⋯</PasteCell>
          </PasteTools>
        </MenuItem>
        <MenuSep />
        <MenuItem><Ico n="brushSm" /><ItemLabel>格式刷</ItemLabel></MenuItem>
        <MenuSep />
        <MenuItem $on><Ico n="tCircle" /><ItemLabel>字体(F)...</ItemLabel><Shortcut>Ctrl+D</Shortcut></MenuItem>
        <MenuItem><Ico n="para" /><ItemLabel>段落(P)...</ItemLabel></MenuItem>
        <MenuItem><Ico n="bulletsTall" /><ItemLabel>项目符号和编号(N)...</ItemLabel></MenuItem>
        <MenuSep />
        <MenuItem><Ico n="link" /><ItemLabel>超链接(H)...</ItemLabel><Shortcut>Ctrl+K</Shortcut></MenuItem>
        <MenuItem><Ico n="comment" /><ItemLabel>插入批注(M)</ItemLabel></MenuItem>
        <MenuSep />
        <MenuItem>
          <Ico n="translate" />
          <ItemLabel>短句翻译(T)</ItemLabel>
          <Shortcut><VLine $h={12} /></Shortcut>
          <SubArrow />
        </MenuItem>
      </Menu>

      <Arrow width="140" height="120" viewBox="0 0 140 120">
        <path d="M136 9L32 100l5 8-27 6 8-27 6 7L134 8z" fill="#f44038" />
      </Arrow>

      <Watermark>
        <Svg viewBox="0 0 165 80" width={165} height={80} $c="none">
          <ellipse cx="60" cy="24" rx="6" ry="8" fill="#fff" fillOpacity=".6" />
          <ellipse cx="73" cy="12" rx="7" ry="9" fill="#fff" fillOpacity=".6" />
          <ellipse cx="88" cy="13" rx="7" ry="9" fill="#fff" fillOpacity=".6" />
          <ellipse cx="96" cy="27" rx="6" ry="8" fill="#fff" fillOpacity=".6" />
          <path d="M78 26c8 0 10 8 16 12 6 5 4 16-6 16-4 0-6-2-10-2s-6 2-11 2c-10 0-12-11-6-16 6-4 9-12 17-12z" fill="#fff" fillOpacity=".55" stroke="#bbb" strokeOpacity=".5" />
        </Svg>
        <WmWords $x={2} $y={27} $s={30}>Bai</WmWords>
        <WmWords $x={68} $y={35} $s={18}>du</WmWords>
        <WmWords $x={105} $y={28} $s={26} $cjk>经验</WmWords>
        <WmWords $x={2} $y={63} $s={17} $thin $ls={0.5}>jingyan.baidu.com</WmWords>
      </Watermark>
    </Screen>
  );
}
